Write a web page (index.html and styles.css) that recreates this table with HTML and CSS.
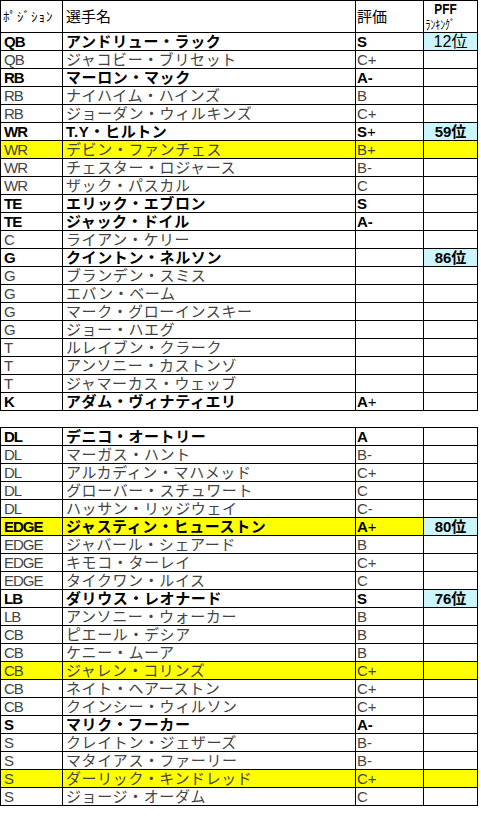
FILE: index.html
```html
<!DOCTYPE html>
<html lang="ja">
<head>
<meta charset="utf-8">
<link rel="stylesheet" href="styles.css">
</head>
<body>
<table class="roster first">
<colgroup><col class="c-pos"><col class="c-name"><col class="c-grade"><col class="c-rank"></colgroup>
<tbody>
<tr class="head"><td class="h-pos">ﾎﾟｼﾞｼｮﾝ</td><td class="h-name">選手名</td><td class="h-grade">評価</td><td class="h-rank"><span class="pff">PFF</span><span class="rk">ﾗﾝｷﾝｸﾞ</span></td></tr>
<tr class="b"><td>QB</td><td>アンドリュー・ラック</td><td>S</td><td class="r n">12位</td></tr>
<tr><td>QB</td><td>ジャコビー・ブリセット</td><td>C+</td><td></td></tr>
<tr class="b"><td>RB</td><td>マーロン・マック</td><td>A-</td><td></td></tr>
<tr><td>RB</td><td>ナイハイム・ハインズ</td><td>B</td><td></td></tr>
<tr><td>RB</td><td>ジョーダン・ウィルキンズ</td><td>C+</td><td></td></tr>
<tr class="b"><td>WR</td><td>T.Y・ヒルトン</td><td>S<span class="n">+</span></td><td class="r">59位</td></tr>
<tr class="y"><td>WR</td><td>デビン・ファンチェス</td><td>B+</td><td></td></tr>
<tr><td>WR</td><td>チェスター・ロジャース</td><td>B-</td><td></td></tr>
<tr><td>WR</td><td>ザック・パスカル</td><td>C</td><td></td></tr>
<tr class="b"><td>TE</td><td>エリック・エブロン</td><td>S</td><td></td></tr>
<tr class="b"><td>TE</td><td>ジャック・ドイル</td><td>A-</td><td></td></tr>
<tr><td>C</td><td>ライアン・ケリー</td><td></td><td></td></tr>
<tr class="b"><td>G</td><td>クイントン・ネルソン</td><td></td><td class="r">86位</td></tr>
<tr><td>G</td><td>ブランデン・スミス</td><td></td><td></td></tr>
<tr><td>G</td><td>エバン・ベーム</td><td></td><td></td></tr>
<tr><td>G</td><td>マーク・グローインスキー</td><td></td><td></td></tr>
<tr><td>G</td><td>ジョー・ハエグ</td><td></td><td></td></tr>
<tr><td>T</td><td>ルレイブン・クラーク</td><td></td><td></td></tr>
<tr><td>T</td><td>アンソニー・カストンゾ</td><td></td><td></td></tr>
<tr><td>T</td><td>ジャマーカス・ウェッブ</td><td></td><td></td></tr>
<tr class="b"><td>K</td><td>アダム・ヴィナティエリ</td><td>A<span class="n">+</span></td><td></td></tr>
</tbody>
</table>

<table class="roster second">
<colgroup><col class="c-pos"><col class="c-name"><col class="c-grade"><col class="c-rank"></colgroup>
<tbody>
<tr class="b"><td>DL</td><td>デニコ・オートリー</td><td>A</td><td></td></tr>
<tr><td>DL</td><td>マーガス・ハント</td><td>B-</td><td></td></tr>
<tr><td>DL</td><td>アルカディン・マハメッド</td><td>C+</td><td></td></tr>
<tr><td>DL</td><td>グローバー・スチュワート</td><td>C</td><td></td></tr>
<tr><td>DL</td><td>ハッサン・リッジウェイ</td><td>C-</td><td></td></tr>
<tr class="b y"><td>EDGE</td><td>ジャスティン・ヒューストン</td><td>A<span class="n">+</span></td><td class="r">80位</td></tr>
<tr><td>EDGE</td><td>ジャバール・シェアード</td><td>B</td><td></td></tr>
<tr><td>EDGE</td><td>キモコ・ターレイ</td><td>C+</td><td></td></tr>
<tr><td>EDGE</td><td>タイクワン・ルイス</td><td>C</td><td></td></tr>
<tr class="b"><td>LB</td><td>ダリウス・レオナード</td><td>S</td><td class="r">76位</td></tr>
<tr><td>LB</td><td>アンソニー・ウォーカー</td><td>B</td><td></td></tr>
<tr><td>CB</td><td>ピエール・デシア</td><td>B</td><td></td></tr>
<tr><td>CB</td><td>ケニー・ムーア</td><td>B</td><td></td></tr>
<tr class="y"><td>CB</td><td>ジャレン・コリンズ</td><td>C+</td><td></td></tr>
<tr><td>CB</td><td>ネイト・ヘアーストン</td><td>C+</td><td></td></tr>
<tr><td>CB</td><td>クインシー・ウィルソン</td><td>C+</td><td></td></tr>
<tr class="b"><td>S</td><td>マリク・フーカー</td><td>A-</td><td></td></tr>
<tr><td>S</td><td>クレイトン・ジェザーズ</td><td>B-</td><td></td></tr>
<tr><td>S</td><td>マタイアス・ファーリー</td><td>B-</td><td></td></tr>
<tr class="y"><td>S</td><td>ダーリック・キンドレッド</td><td>C+</td><td></td></tr>
<tr><td>S</td><td>ジョージ・オーダム</td><td>C</td><td></td></tr>
</tbody>
</table>
</body>
</html>
```

FILE: styles.css
```css
html, body {
  margin: 0;
  padding: 0;
  background: #fff;
}

.roster {
  border-collapse: collapse;
  table-layout: fixed;
  width: 478px;
  font-family: "Liberation Sans", "Noto Sans CJK JP", sans-serif;
  font-size: 15px;
  color: #444;
}

.second {
  margin-top: 16px;
}

.c-pos { width: 62px; }
.c-name { width: 293px; }
.c-grade { width: 68px; }
.c-rank { width: 54px; }

.roster td {
  border: 1px solid #000;
  padding: 0 0 0 2px;
  height: 17px;
  line-height: 17px;
  white-space: nowrap;
  vertical-align: middle;
}

.roster td:nth-child(1) {
  letter-spacing: -1px;
  padding-left: 3px;
}

.roster td:nth-child(2) {
  padding-left: 3px;
  letter-spacing: 0.6px;
}

.roster td:nth-child(3) {
  padding-left: 1px;
}

.roster td:nth-child(4) {
  text-align: center;
  padding-left: 0;
  letter-spacing: 0;
}

.roster .head td {
  height: 31px;
  color: #000;
  line-height: 31px;
  letter-spacing: 0;
}

.roster .head .h-pos {
  font-size: 13px;
  letter-spacing: 1px;
  padding-left: 2px;
}

.roster .head .h-name {
  font-size: 15px;
}

.roster .head .h-rank {
  line-height: 14px;
  vertical-align: top;
  text-align: left;
}

.pff {
  display: block;
  font-weight: bold;
  font-size: 14px;
  padding: 1px 0 0 12px;
  transform: scaleX(0.85);
  transform-origin: left;
}

.rk {
  display: block;
  font-size: 13px;
  padding: 2px 0 0 2px;
  transform: scaleX(0.75);
  transform-origin: left;
}

.b td {
  font-weight: bold;
  color: #000;
}

.n {
  font-weight: normal;
}

.roster .b td.n {
  font-weight: normal;
  color: #000;
  font-size: 16px;
}

.y td {
  background: #ffff00;
}

.roster td.r {
  background: #ccf6fb;
}
```
